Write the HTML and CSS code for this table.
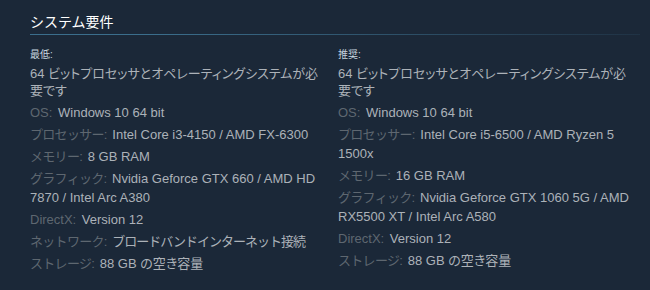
FILE: index.html
```html
<!DOCTYPE html>
<html lang="ja">
<head>
<meta charset="utf-8">
<link rel="stylesheet" href="styles.css">
</head>
<body>
<div class="sysreq">
  <h2 class="title">システム要件</h2>
  <div class="cols">
    <div class="col">
      <div class="heading">最低:</div>
      <ul class="list">
        <li class="note">64 <span class="jp">ビットプロセッサとオペレーティングシステムが必要です</span></li>
        <li><span class="lbl">OS:</span> Windows 10 64 bit</li>
        <li><span class="lbl jl">プロセッサー:</span> Intel Core i3-4150 / AMD FX-6300</li>
        <li><span class="lbl jl">メモリー:</span> 8 GB RAM</li>
        <li><span class="lbl jl">グラフィック:</span> Nvidia Geforce GTX 660 / AMD HD 7870 / Intel Arc A380</li>
        <li><span class="lbl">DirectX:</span> Version 12</li>
        <li><span class="lbl jl">ネットワーク:</span> <span class="jv">ブロードバンドインターネット接続</span></li>
        <li><span class="lbl jl">ストレージ:</span> 88 GB <span class="jp">の空き容量</span></li>
      </ul>
    </div>
    <div class="col">
      <div class="heading">推奨:</div>
      <ul class="list">
        <li class="note">64 <span class="jp">ビットプロセッサとオペレーティングシステムが必要です</span></li>
        <li><span class="lbl">OS:</span> Windows 10 64 bit</li>
        <li><span class="lbl jl">プロセッサー:</span> Intel Core i5-6500 / AMD Ryzen 5 1500x</li>
        <li><span class="lbl jl">メモリー:</span> 16 GB RAM</li>
        <li><span class="lbl jl">グラフィック:</span> Nvidia Geforce GTX 1060 5G / AMD RX5500 XT / Intel Arc A580</li>
        <li><span class="lbl">DirectX:</span> Version 12</li>
        <li><span class="lbl jl">ストレージ:</span> 88 GB <span class="jp">の空き容量</span></li>
      </ul>
    </div>
  </div>
</div>
</body>
</html>
```
FILE: styles.css
```css
html, body {
  margin: 0;
  padding: 0;
  background: #1b2838;
}
body {
  width: 650px;
  height: 290px;
  overflow: hidden;
  font-family: "Liberation Sans", Arial, "Noto Sans CJK JP", sans-serif;
  color: #acb2b8;
}
.sysreq {
  padding: 12px 0 0 30px;
}
.title {
  margin: 0;
  width: 610px;
  font-size: 14px;
  font-weight: normal;
  line-height: 20px;
  color: #ffffff;
  padding-bottom: 2px;
  border-bottom: 1px solid transparent;
  border-image: linear-gradient(to right, #3b6e8c 0%, #3b6e8c 20%, rgba(59,110,140,0.15) 100%) 1;
}
.cols {
  display: grid;
  grid-template-columns: 300px 300px;
  column-gap: 8px;
  padding-top: 13px;
}
.heading {
  font-size: 10px;
  line-height: 14px;
  color: #c6d4df;
  margin-bottom: 3px;
}
.list {
  list-style: none;
  margin: 0;
  padding: 0;
  font-size: 13px;
}
.list li {
  line-height: 19px;
  margin-bottom: 3px;
}
.list li.note {
  line-height: 17px;
  margin-bottom: 4px;
}
.jp {
  font-feature-settings: "palt";
}
.jl {
  letter-spacing: -0.7px;
}
.jv {
  letter-spacing: -1px;
}
.lbl {
  color: #5e6770;
  margin-right: 2px;
}
```
